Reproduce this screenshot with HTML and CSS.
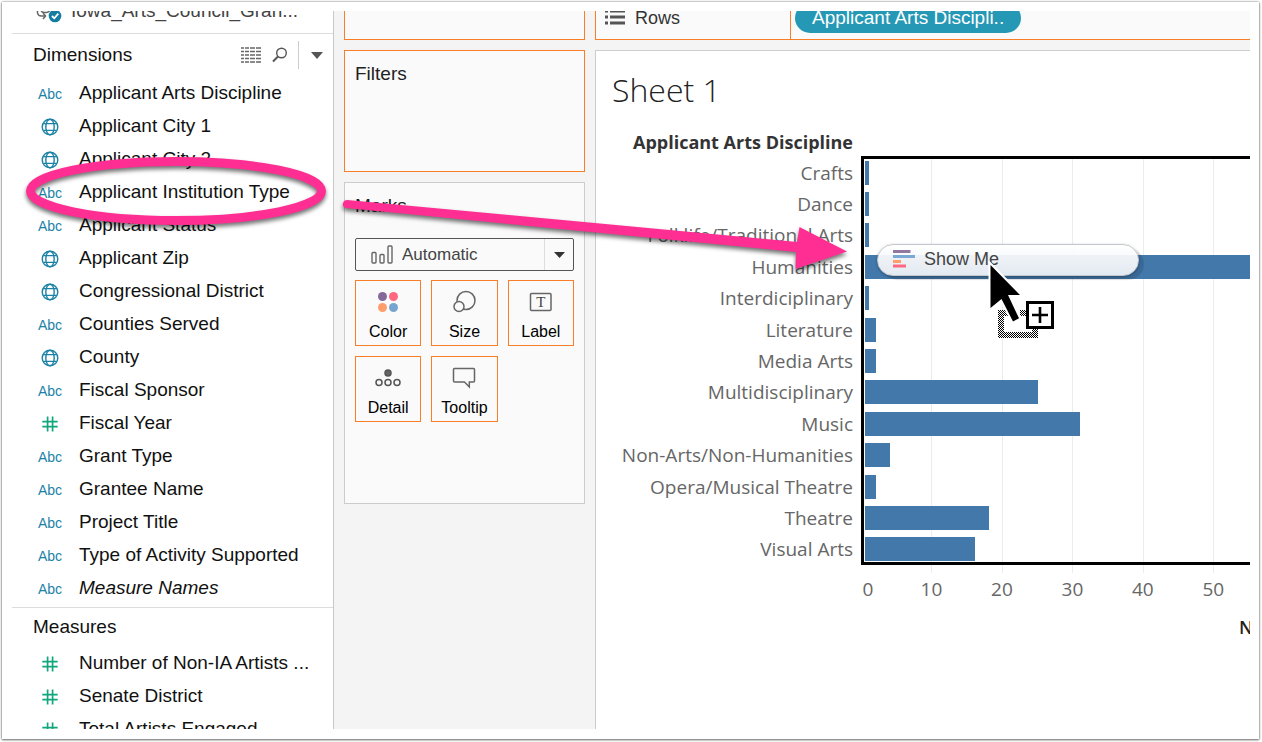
FILE: index.html
```html
<!DOCTYPE html>
<html lang="en">
<head>
<meta charset="utf-8">
<title>Sheet 1</title>
<link rel="stylesheet" href="styles.css">
</head>
<body>
<svg class="defs" aria-hidden="true">
  <symbol id="globe" viewBox="0 0 18 18"><g fill="none" stroke="currentColor" stroke-width="1.4"><circle cx="9" cy="9" r="7.8"/><ellipse cx="9" cy="9" rx="4.2" ry="7.8"/><path d="M2.3 5.6h13.4M2.3 12.4h13.4"/></g></symbol>
  <symbol id="hash" viewBox="0 0 18 18"><path d="M6.6 1.5v15M11.6 1.5v15M1.3 6.7h15.4M1.3 11.7h15.4" fill="none" stroke="currentColor" stroke-width="1.7"/></symbol>
</svg>
<div class="frame">
  <main class="app">
    <aside class="data-pane">
      <div class="source">
        <div class="source-row">
          <svg class="source-icon" width="28" height="24" viewBox="0 0 28 24"><g fill="none" stroke="#666" stroke-width="1.5"><path d="M1.500 8v6q.5 3 4 3H9"/><path d="M7 14l2.500 3L7 20"/><path d="M5 10.500q0 3 3.500 3h2q4-.5 3.500-5" /></g><circle cx="19" cy="17" r="6.3" fill="#147d9f"/><path d="M16 17l2.300 2.300 4-4.600" fill="none" stroke="#fff" stroke-width="1.800"/></svg>
          <span>Iowa_Arts_Council_Gran...</span>
        </div>
      </div>
      <header class="pane-head">
        <h2>Dimensions</h2>
        <div class="tools">
          <button aria-label="View data"><svg width="20" height="16" viewBox="0 0 20 16"><path d="M0 1h20M0 4.500h20M0 8h20M0 11.500h20M0 15h20" stroke="#666" stroke-width="1.500" stroke-dasharray="3 1 4 1 5 1 5 1"/></svg></button>
          <button aria-label="Search"><svg width="16" height="16" viewBox="0 0 16 16" fill="none" stroke="#555"><circle cx="9.500" cy="6" r="4.800" stroke-width="1.400"/><path d="M6 9.500L1 14.500" stroke-width="2"/></svg></button>
          <button class="menu" aria-label="Menu"><svg width="12" height="7" viewBox="0 0 12 7"><path d="M0 0h12L6 7z" fill="#555"/></svg></button>
        </div>
      </header>
      <ul class="fields">
        <li><i class="abc">Abc</i>Applicant Arts Discipline</li>
        <li><svg class="globe"><use href="#globe"/></svg>Applicant City 1</li>
        <li><svg class="globe"><use href="#globe"/></svg>Applicant City 2</li>
        <li><i class="abc">Abc</i>Applicant Institution Type</li>
        <li><i class="abc">Abc</i>Applicant Status</li>
        <li><svg class="globe"><use href="#globe"/></svg>Applicant Zip</li>
        <li><svg class="globe"><use href="#globe"/></svg>Congressional District</li>
        <li><i class="abc">Abc</i>Counties Served</li>
        <li><svg class="globe"><use href="#globe"/></svg>County</li>
        <li><i class="abc">Abc</i>Fiscal Sponsor</li>
        <li><svg class="hash"><use href="#hash"/></svg>Fiscal Year</li>
        <li><i class="abc">Abc</i>Grant Type</li>
        <li><i class="abc">Abc</i>Grantee Name</li>
        <li><i class="abc">Abc</i>Project Title</li>
        <li><i class="abc">Abc</i>Type of Activity Supported</li>
        <li><i class="abc">Abc</i><em>Measure Names</em></li>
      </ul>
      <header class="pane-head measures"><h2>Measures</h2></header>
      <ul class="fields">
        <li><svg class="hash"><use href="#hash"/></svg>Number of Non-IA Artists ...</li>
        <li><svg class="hash"><use href="#hash"/></svg>Senate District</li>
        <li><svg class="hash"><use href="#hash"/></svg>Total Artists Engaged</li>
      </ul>
    </aside>

    <section class="cards">
      <div class="card pages"></div>
      <div class="card filters"><h3>Filters</h3></div>
      <div class="card marks">
        <h3>Marks</h3>
        <div class="mark-type">
          <svg width="24" height="20" viewBox="0 0 24 20" fill="none" stroke="#666" stroke-width="1.400"><rect x="1" y="7.500" width="4" height="10.500" rx="1"/><rect x="9" y="9.500" width="4" height="8.500" rx="1"/><rect x="17" y="1" width="4" height="17" rx="1"/></svg>
          <select aria-label="Mark type"><option>Automatic</option></select>
          <span class="arrow"><svg width="11" height="6" viewBox="0 0 11 6"><path d="M0 0h11L5.500 6z" fill="#333"/></svg></span>
        </div>
        <div class="mark-grid">
          <button><svg width="26" height="24" viewBox="0 0 26 24"><circle cx="7.500" cy="6.500" r="4.500" fill="#85689a"/><circle cx="18.500" cy="6.500" r="4.500" fill="#ff6680"/><circle cx="7.500" cy="17.500" r="4.500" fill="#ff9e6b"/><circle cx="18.500" cy="17.500" r="4.500" fill="#78a5cf"/></svg>Color</button>
          <button><svg width="26" height="24" viewBox="0 0 26 24" fill="#fafafa" stroke="#666" stroke-width="1.500"><circle cx="15" cy="10.500" r="9"/><circle cx="8" cy="16.500" r="5"/></svg>Size</button>
          <button><svg width="26" height="24" viewBox="0 0 26 24"><rect x="2.500" y="3.500" width="20.500" height="17" rx="1" fill="none" stroke="#666" stroke-width="1.500"/><text x="12.750" y="17" text-anchor="middle" class="serif-t">T</text></svg>Label</button>
          <button><svg width="26" height="24" viewBox="0 0 26 24" fill="none" stroke="#555" stroke-width="1.500"><circle cx="13" cy="7" r="3" fill="#666"/><circle cx="4" cy="16.500" r="3"/><circle cx="13" cy="16.500" r="3"/><circle cx="22" cy="16.500" r="3"/></svg>Detail</button>
          <button><svg width="26" height="24" viewBox="0 0 26 24" fill="none" stroke="#666" stroke-width="1.500"><path d="M3.500 2.500h19q1 0 1 1v11.500q0 1-1 1h-4.200v5L13.500 16h-10q-1 0-1-1V3.500q0-1 1-1z"/></svg>Tooltip</button>
        </div>
      </div>
    </section>

    <section class="work">
      <div class="shelf">
        <div class="shelf-name"><svg width="20" height="16" viewBox="0 0 20 16"><path d="M0 0h3M5 0h15M0 6h3M5 6h15M0 12h3M5 12h15" stroke="#555" stroke-width="3"/></svg>Rows</div>
        <div class="shelf-drop"><button class="pill">Applicant Arts Discipli..</button></div>
      </div>
      <div class="sheet">
        <h1>Sheet 1</h1>
        <div class="chart">
          <div class="row-head">Applicant Arts Discipline</div>
          <ul class="labels">
            <li>Crafts</li><li>Dance</li><li>Folklife/Traditional Arts</li><li>Humanities</li><li>Interdiciplinary</li><li>Literature</li><li>Media Arts</li><li>Multidisciplinary</li><li>Music</li><li>Non-Arts/Non-Humanities</li><li>Opera/Musical Theatre</li><li>Theatre</li><li>Visual Arts</li>
          </ul>
          <div class="plot">
            <div class="ticks"><i style="--v:10"></i><i style="--v:20"></i><i style="--v:30"></i><i style="--v:40"></i><i style="--v:50"></i></div>
            <div class="bars">
              <b style="--v:1"></b><b style="--v:1"></b><b style="--v:1"></b><b style="--v:60"></b><b style="--v:1"></b><b style="--v:2"></b><b style="--v:2"></b><b style="--v:25"></b><b style="--v:31"></b><b style="--v:4"></b><b style="--v:2"></b><b style="--v:18"></b><b style="--v:16"></b>
            </div>
          </div>
          <div class="axis"><span style="--v:1">0</span><span style="--v:10">10</span><span style="--v:20">20</span><span style="--v:30">30</span><span style="--v:40">40</span><span style="--v:50">50</span></div>
          <div class="axis-title">N</div>
        </div>
      </div>
    </section>
  </main>

  <div class="drag"><svg width="22" height="19" viewBox="0 0 22 19"><path d="M0 1.500h17.500" stroke="#9278a0" stroke-width="3"/><path d="M0 6.500h22" stroke="#7ba9d6" stroke-width="3"/><path d="M0 11.500h8" stroke="#ff9e6b" stroke-width="3"/><path d="M0 16h13" stroke="#ff6680" stroke-width="3"/></svg>Show Me</div>

  <svg class="overlay" width="1262" height="742" viewBox="0 0 1262 742" aria-hidden="true">
    <defs>
      <pattern id="dither" width="2" height="2" patternUnits="userSpaceOnUse"><rect width="2" height="2" fill="#fff"/><path d="M0 0h1v1H0zM1 1h1v1H1z"/></pattern>
    </defs>
    <path d="M998 310h10v6h-4v16h28v-4h6v10h-40zM1020 310h6v6h-6z" fill="url(#dither)" shape-rendering="crispEdges"/>
    <path d="M990.500 265v43l11-9 11.500 22.500 6-3.200-11-23.300H1020z" fill="#000" stroke="#fff" stroke-width="4" paint-order="stroke"/>
    <rect x="1027.500" y="302.500" width="25" height="25" fill="#fff" stroke="#000" stroke-width="3"/>
    <path d="M1032 315h16M1040 307v16" stroke="#000" stroke-width="2.600"/>
    <g class="ink">
      <ellipse cx="176" cy="191" rx="145.500" ry="29.500" fill="none" stroke="#ff2e93" stroke-width="9"/>
      <path d="M347 200L797 242 799.500 227 847 251.500 795.500 269 796 252 346 208Q342 207 343 203 344 200 347 200z" fill="#ff2e93"/>
    </g>
  </svg>
</div>
</body>
</html>
```
FILE: styles.css
```css
* { box-sizing: border-box; }
body {
  margin: 0;
  height: 100vh;
  overflow: hidden;
  background: #fff;
  font: 19px/24px "Liberation Sans", sans-serif;
  color: #111;
}
h1, h2, h3, ul { margin: 0; padding: 0; font-weight: 400; list-style: none; }
button { margin: 0; padding: 0; border: 0; background: none; font: inherit; color: inherit; }
.defs { display: none; }

.frame { height: 100vh; display: flex; padding: 11px 12px 13px; }
.frame::before {
  content: "";
  position: absolute;
  inset: 2px 3px 3px 2px;
  box-shadow: 0 0 2px #777, 0 1px 2px #777;
  pointer-events: none;
}
.app {
  flex: 1;
  min-width: 0;
  display: grid;
  grid-template-columns: 322px 261px minmax(0, 1fr);
  overflow: hidden;
  background: #f4f4f4;
  position: relative;
}

/* Data pane */
.data-pane { background: #fff; border-right: 1px solid #c8c8c8; overflow: hidden; }
.source {
  height: 23px;
  display: flex;
  flex-direction: column;
  justify-content: flex-end;
  border-bottom: 1px solid #dcdcdc;
  overflow: hidden;
}
.source-row { flex: none; display: flex; align-items: center; height: 24px; margin-bottom: 10px; padding-left: 24px; color: #444; white-space: nowrap; }
.source-icon { margin-right: 7px; }
.pane-head { height: 42px; display: flex; align-items: center; justify-content: space-between; padding: 0 10px 0 21px; }
.pane-head h2 { font-size: 19px; line-height: 24px; }
.tools { display: flex; align-items: center; height: 28px; }
.tools button { display: flex; align-items: center; height: 28px; margin-left: 11px; }
.tools .menu { margin-left: 10px; padding-left: 12px; border-left: 1px solid #ccc; }
.measures { height: 39px; margin-top: 3px; border-top: 1px solid #dcdcdc; }
.fields li { height: 33px; display: grid; grid-template-columns: 24px 1fr; column-gap: 17px; align-items: center; padding-left: 26px; white-space: nowrap; }
.abc { font-style: normal; font-size: 14px; color: #1b82a6; padding-top: 2px; }
.globe, .hash { width: 18px; height: 18px; justify-self: center; margin-top: 2px; }
.globe { color: #1b82a6; }
.hash { color: #12a67c; }

/* Cards */
.cards { display: flex; flex-direction: column; gap: 10px; padding: 0 10px; }
.card { background: #fafafa; border: 1px solid #fa7d28; padding: 11px 10px; color: #222; }
.card h3 { font-size: 19px; line-height: 24px; }
.pages { height: 29px; border-top: 0; }
.filters { height: 122px; }
.marks { height: 322px; border-color: #ccc; }
.mark-type {
  display: flex;
  align-items: center;
  height: 33px;
  margin-top: 20px;
  padding-left: 15px;
  border: 1px solid #555;
  border-radius: 2px;
}
.mark-type select {
  flex: 1;
  min-width: 0;
  appearance: none;
  border: 0;
  background: none;
  padding: 0 0 0 7px;
  font: 17px/24px "Liberation Sans", sans-serif;
  color: #444;
}
.arrow { width: 29px; height: 100%; display: flex; align-items: center; justify-content: center; border-left: 1px solid #ddd; }
.mark-grid { display: grid; grid-template-columns: repeat(3, 1fr); gap: 10px; margin-top: 9px; }
.mark-grid button {
  height: 66px;
  display: flex;
  flex-direction: column;
  align-items: center;
  justify-content: space-between;
  padding: 9px 0 2px;
  border: 1px solid #fa7d28;
  font-size: 16px;
  line-height: 22px;
  color: #000;
}
.serif-t { font: 15px "Liberation Serif", serif; fill: #444; }

/* Worksheet */
.work { display: flex; flex-direction: column; min-width: 0; }
.shelf { height: 29px; flex: none; display: flex; border: 1px solid #fa7d28; border-width: 0 0 1px 1px; background: #fafafa; color: #333; overflow: hidden; }
.shelf-name { width: 195px; display: flex; gap: 10px; padding-left: 9px; font-size: 18px; line-height: 14px; border-right: 1px solid #fa7d28; }
.shelf-drop { flex: 1; display: flex; align-items: flex-end; padding: 0 4px 6px; }
.pill { height: 30px; padding: 0 17px; border-radius: 15px; background: #2598b5; color: #fff; font-size: 19px; line-height: 30px; white-space: nowrap; }
.sheet { flex: 1; margin-top: 10px; border: 1px solid #ccc; border-width: 1px 0 0 1px; background: #fff; }
.sheet h1 { padding: 18px 16px 0; font: 300 32px/42px "Open Sans", sans-serif; color: #222; }
.chart {
  display: grid;
  grid-template-columns: 257px minmax(0, 1fr);
  grid-template-rows: 46px 408px 42px auto;
  column-gap: 8px;
  font: 19px/24px "Open Sans", sans-serif;
  color: #666;
}
.row-head { align-self: end; justify-self: end; font-size: 18px; font-weight: 700; color: #333; padding-bottom: 3px; }
.labels { grid-row: 2; display: grid; grid-auto-rows: 1fr; text-align: right; }
.labels li { display: flex; align-items: center; justify-content: flex-end; white-space: nowrap; }
.plot { grid-row: 2; grid-column: 2; position: relative; }
.plot::after {
  content: "";
  position: absolute;
  inset: -1px 0 0;
  border: 3px solid #000;
  border-right: 0;
  box-shadow: inset 1px 0 #fff;
}
.ticks i { position: absolute; top: 0; bottom: -8px; left: calc(var(--v) / 55.2 * 100%); border-left: 1px solid #ececec; }
.bars { position: relative; height: 100%; display: grid; grid-auto-rows: 1fr; overflow: hidden; }
.bars b { align-self: center; height: 24px; width: calc(var(--v) / 55.2 * 100% + 1px); background: #4378ab; }
.axis { grid-row: 3; grid-column: 2; position: relative; }
.axis span { position: absolute; top: 12px; left: calc(var(--v) / 55.2 * 100%); width: 40px; margin-left: -20px; text-align: center; }
.axis-title { grid-row: 4; grid-column: 2; justify-self: end; width: 11px; margin-top: 8px; overflow: hidden; color: #222; font-size: 18px; font-weight: 600; }

/* Dragged item and annotations */
.drag {
  position: absolute;
  left: 877px;
  top: 244px;
  width: 262px;
  height: 32px;
  display: flex;
  align-items: center;
  gap: 9px;
  padding: 0 15px 2px;
  border: 1px solid #c4c8cc;
  border-radius: 16px;
  background: linear-gradient(rgba(255,255,255,.95), rgba(236,240,245,.95));
  box-shadow: 5px 4px 1px rgba(0,0,0,.12), 0 1px 3px rgba(0,0,0,.3);
  font-size: 18px;
  color: #444;
}
.overlay { position: absolute; left: 0; top: 0; pointer-events: none; }
.ink { filter: drop-shadow(0 3px 2px rgba(0,0,0,.55)); }
```
